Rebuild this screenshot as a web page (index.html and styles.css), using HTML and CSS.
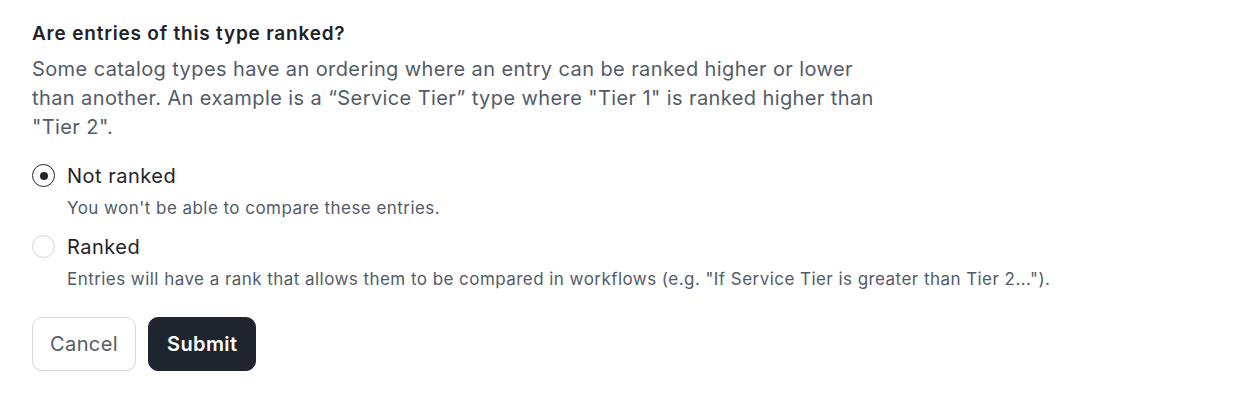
FILE: index.html
```html
<!DOCTYPE html>
<html lang="en">
<head>
  <meta charset="UTF-8" />
  <title>Catalog type ranking</title>
  <link rel="stylesheet" href="styles.css">
</head>
<body>
  <form class="form">
    <h2 class="question">Are entries of this type ranked?</h2>
    <p class="help">Some catalog types have an ordering where an entry can be ranked higher or lower than another. An example is a “Service Tier” type where "Tier 1" is ranked higher than "Tier 2".</p>

    <div class="options">
      <label class="option">
        <span class="radio checked"></span>
        <span class="option-text">
          <span class="option-label">Not ranked</span>
          <span class="option-desc">You won't be able to compare these entries.</span>
        </span>
      </label>
      <label class="option">
        <span class="radio"></span>
        <span class="option-text">
          <span class="option-label">Ranked</span>
          <span class="option-desc">Entries will have a rank that allows them to be compared in workflows (e.g. "If Service Tier is greater than Tier 2...").</span>
        </span>
      </label>
    </div>

    <div class="actions">
      <button type="button" class="btn btn-secondary">Cancel</button>
      <button type="submit" class="btn btn-primary">Submit</button>
    </div>
  </form>
</body>
</html>
```

FILE: styles.css
```css
body {
  margin: 0;
  background: #fff;
  font-family: 'Inter', 'Noto Sans', sans-serif;
  color: #1f2329;
}

.form {
  padding: 21px 32px;
}

.question {
  margin: 0 0 8px 0;
  font-size: 19px;
  font-weight: 600;
  line-height: 26px;
  letter-spacing: 0.8px;
  color: #1f2329;
}

.help {
  margin: 0 0 20px 0;
  max-width: 852px;
  font-size: 20px;
  line-height: 29px;
  letter-spacing: 0.4px;
  color: #535b68;
}

.options {
  display: flex;
  flex-direction: column;
  gap: 14px;
}

.option {
  display: flex;
  gap: 12px;
  align-items: flex-start;
}

.radio {
  flex: none;
  width: 23px;
  height: 23px;
  margin-top: 2px;
  border: 1px solid #cdd2da;
  border-radius: 50%;
  box-sizing: border-box;
  display: flex;
  align-items: center;
  justify-content: center;
}

.radio.checked {
  border: 1.5px solid #1f2329;
}

.radio.checked::after {
  content: '';
  width: 8px;
  height: 8px;
  border-radius: 50%;
  background: #1f2329;
}

.option-text {
  display: flex;
  flex-direction: column;
  gap: 7px;
}

.option-label {
  font-size: 20px;
  line-height: 28px;
  letter-spacing: 0.5px;
  color: #1f2329;
}

.option-desc {
  font-size: 17px;
  line-height: 22px;
  letter-spacing: 0.45px;
  color: #535b68;
}

.actions {
  display: flex;
  gap: 12px;
  margin-top: 27px;
}

.btn {
  height: 54px;
  padding: 0 17px;
  border-radius: 10px;
  font-family: inherit;
  font-size: 20px;
  letter-spacing: 0.4px;
}

.btn-secondary {
  background: #fff;
  border: 1px solid #d7dbe1;
  color: #535b68;
  box-shadow: 0 1px 2px #0000000d;
}

.btn-primary {
  background: #1f252e;
  border: 1px solid #1f252e;
  color: #fff;
  font-weight: 600;
  padding: 0 18px;
}
```
